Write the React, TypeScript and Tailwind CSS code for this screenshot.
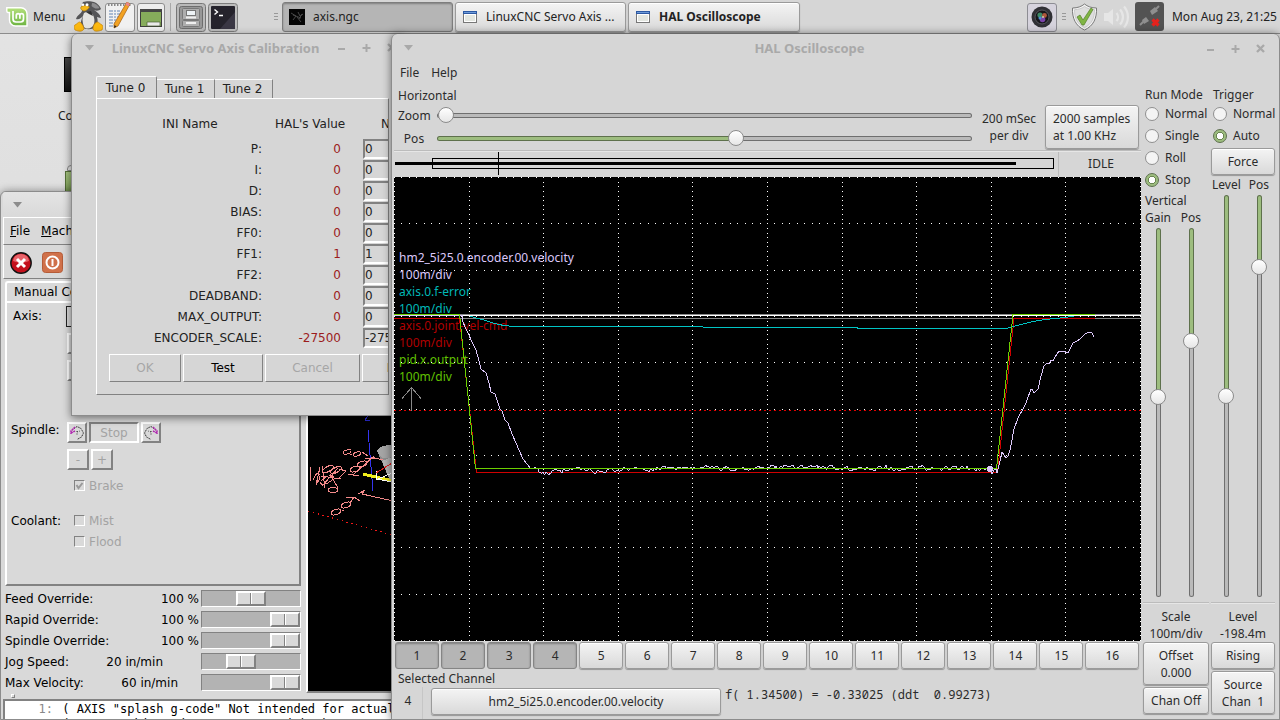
import React from "react";

type RangeStyle = React.CSSProperties & { "--fill"?: string };

/* ---------- shared widgets ---------- */

const gtkButton =
  "rounded-[3px] border border-[#9a9a9a] bg-linear-to-b from-[#f4f4f4] to-[#d9d9d9] shadow-[inset_0_1px_0_#ffffff,0_1px_1px_rgba(0,0,0,0.3)]";

function HSlider({ label, value }: { label: string; value: number }) {
  const style: RangeStyle = { "--fill": `${value}%` };
  return (
    <input
      type="range"
      aria-label={label}
      min={0}
      max={100}
      defaultValue={value}
      style={style}
      className="h-4 w-full min-w-0 appearance-none bg-transparent [&::-webkit-slider-runnable-track]:h-[5px] [&::-webkit-slider-runnable-track]:rounded-full [&::-webkit-slider-runnable-track]:border [&::-webkit-slider-runnable-track]:border-black/40 [&::-webkit-slider-runnable-track]:bg-[linear-gradient(to_right,#9dbd7f_var(--fill),#bababa_var(--fill))] [&::-webkit-slider-runnable-track]:bg-origin-border [&::-webkit-slider-thumb]:-mt-[7px] [&::-webkit-slider-thumb]:size-4 [&::-webkit-slider-thumb]:appearance-none [&::-webkit-slider-thumb]:rounded-full [&::-webkit-slider-thumb]:border [&::-webkit-slider-thumb]:border-[#8c8c8c] [&::-webkit-slider-thumb]:bg-linear-to-b [&::-webkit-slider-thumb]:from-white [&::-webkit-slider-thumb]:to-[#e6e6e6]"
    />
  );
}

function VSlider({ label, value }: { label: string; value: number }) {
  const style: RangeStyle = { "--fill": `${value}%` };
  return (
    <input
      type="range"
      aria-label={label}
      min={0}
      max={100}
      step="any"
      defaultValue={value}
      style={style}
      className="h-full w-4 appearance-none bg-transparent [writing-mode:vertical-lr] [&::-webkit-slider-runnable-track]:w-[5px] [&::-webkit-slider-runnable-track]:rounded-full [&::-webkit-slider-runnable-track]:border [&::-webkit-slider-runnable-track]:border-black/40 [&::-webkit-slider-runnable-track]:bg-[linear-gradient(to_bottom,#9dbd7f_var(--fill),#bababa_var(--fill))] [&::-webkit-slider-runnable-track]:bg-origin-border [&::-webkit-slider-thumb]:-ml-[7px] [&::-webkit-slider-thumb]:size-4 [&::-webkit-slider-thumb]:appearance-none [&::-webkit-slider-thumb]:rounded-full [&::-webkit-slider-thumb]:border [&::-webkit-slider-thumb]:border-[#8c8c8c] [&::-webkit-slider-thumb]:bg-linear-to-b [&::-webkit-slider-thumb]:from-white [&::-webkit-slider-thumb]:to-[#e6e6e6]"
    />
  );
}

function GtkRadio({ name, label, checked }: { name: string; label: string; checked?: boolean }) {
  return (
    <label className="flex h-[22px] items-center gap-[6px] whitespace-nowrap pl-[2px]">
      <input
        type="radio"
        name={name}
        defaultChecked={checked}
        className="size-[14px] shrink-0 appearance-none rounded-full border border-[#8f8f8f] bg-[#f4f4f4] checked:border-[#5c6e4c] checked:bg-[radial-gradient(circle,#ffffff_0_3px,#6b8552_3px_4px,#9dbd7f_4px)]"
      />
      {label}
    </label>
  );
}

function TitleBar({ title, className }: { title: string; className: string }) {
  return (
    <div className={className}>
      <svg width="9" height="6" viewBox="0 0 9 6" className="shrink-0">
        <path d="M0 0h9L4.500 5.500z" fill="#a9a9a9" />
      </svg>
      <div className="flex-1 truncate text-center font-['Noto_Sans',sans-serif] text-[13px] leading-4 font-bold text-[#a9a9a9]">
        {title}
      </div>
      <div className="flex shrink-0 gap-4">
        <button aria-label="Minimize" className="size-[9px]">
          <svg width="9" height="9" viewBox="0 0 9 9"><path d="M1 6h7" stroke="#a9a9a9" strokeWidth="2" /></svg>
        </button>
        <button aria-label="Maximize" className="size-[9px]">
          <svg width="9" height="9" viewBox="0 0 9 9"><path d="M.5 5h8M4.500 1v8" stroke="#a9a9a9" strokeWidth="2" /></svg>
        </button>
        <button aria-label="Close" className="size-[9px]">
          <svg width="9" height="9" viewBox="0 0 9 9"><path d="M1 1l7 7M8 1l-7 7" stroke="#a9a9a9" strokeWidth="2.400" /></svg>
        </button>
      </div>
    </div>
  );
}

/* ---------- top panel ---------- */

function MintLogo() {
  return (
    <svg width="22" height="20" viewBox="0 0 22 20">
      <defs>
        <linearGradient id="mint" x1="0" y1="0" x2="0" y2="1">
          <stop offset="0" stopColor="#b5e07c" />
          <stop offset="1" stopColor="#6db442" />
        </linearGradient>
      </defs>
      <path d="M.8.8h14.200a6 6 0 0 1 6 6v12.200h-11.500a6 6 0 0 1-6-6V5.500H2A1.500 1.500 0 0 1 .8 4z" fill="url(#mint)" stroke="#fff" strokeWidth="1.400" />
      <path d="M7 4v8a3 3 0 0 0 3 3h4.500a3 3 0 0 0 3-3V8.500a1.800 1.800 0 0 0-3.600 0v3.300M13.900 8.500a1.800 1.800 0 0 0-3.600 0v3.300" fill="none" stroke="#fff" strokeWidth="1.700" />
    </svg>
  );
}

function Penguin() {
  return (
    <svg width="29" height="31" viewBox="0 0 29 31">
      <path d="M9 1c3-1 8-1 11 0 3 1 6 4 7 7-2 2-5 2-7 1 3 2 6 4 7 8-2 0-3-1-4-1 1 3 1 7-1 10-4 3-11 3-14 0-2-3-1-7 1-11-2 2-4 4-7 3 1-4 5-5 6-8 0-2-1-6 1-9z" fill="#555557" />
      <path d="M18 2c3 0 6 2 7.500 5-3 1.500-6 0-8-2z" fill="#8d8d8f" />
      <path d="M10 12c3-2 7-1 9 2 2 4 2 9-1 12-3 2-6 2-8 0-2-5-2-10 0-14z" fill="#e4e3df" />
      <path d="M12 11l5-1 2 5-4-2z" fill="#333" />
      <path d="M7 6c2-2 6-2 8.500 0-1 2-3.500 4-5.500 4-2-.500-4-2-3-4z" fill="#f5b719" stroke="#a87609" strokeWidth=".6" />
      <circle cx="9" cy="3.800" r="1.300" fill="#fff" />
      <circle cx="13" cy="3.800" r="1.500" fill="#fff" />
      <path d="M.8 24c2-.500 3-3 5-3 2 1 4.200 5 4.200 7-2 3-5 2.500-9 1-1-2-1-3-.2-5zM28.200 24c-2-.500-3-3-5-3-3 1-4.200 4-4.200 7 1 3 5 2.500 9 1 1-2 1-3 .2-5z" fill="#fbb80f" stroke="#c88407" strokeWidth=".7" />
    </svg>
  );
}

function NotesIcon() {
  return (
    <svg width="30" height="30" viewBox="0 0 30 30">
      <rect x=".5" y="1.500" width="29" height="28" rx="2.500" fill="#f1f1f1" stroke="#8d8d8d" />
      <path d="M3 3h24" stroke="#888" strokeWidth="2" strokeDasharray="1.500 1.500" />
      <path d="M4 9h11M4 12h14M4 15h12M4 18h10M4 21h8M4 24h7" stroke="#93a9c7" strokeWidth="1.300" strokeDasharray="4 1 2 1" />
      <path d="M22 0l3 2-12 22-4 2 0-4z" fill="#f2a223" stroke="#a35e10" strokeWidth=".7" />
      <path d="M22 0l3 2-1.500 2.500-3-2z" fill="#e9838a" />
      <path d="M9.500 23l2 1.500-2.500 1.500z" fill="#222" />
    </svg>
  );
}

function ShowDesktopIcon() {
  return (
    <svg width="28" height="30" viewBox="0 0 28 30">
      <rect x=".5" y="1.500" width="27" height="28" rx="2.500" fill="#ededed" stroke="#8d8d8d" />
      <rect x="3.500" y="7.500" width="21" height="17" fill="#86ac5b" stroke="#3d3d3d" />
      <path d="M3 7h22v3H3z" fill="#454545" />
      <path d="M10 20h13v4H10z" fill="#e9e9e9" stroke="#4a5f32" strokeWidth=".7" />
    </svg>
  );
}

function CabinetIcon() {
  return (
    <svg width="30" height="30" viewBox="0 0 30 30">
      <rect x=".5" y="1.500" width="29" height="28" rx="3" fill="#b9b9b9" stroke="#777" />
      <rect x="3.500" y="4.500" width="23" height="22" rx="2" fill="#989898" stroke="#6d6d6d" />
      <rect x="6.500" y="6.500" width="17" height="11" rx="1" fill="#aeaeae" stroke="#787878" />
      <rect x="6.500" y="18.500" width="17" height="6" rx="1" fill="#aeaeae" stroke="#787878" />
      <rect x="10.500" y="8.500" width="9" height="5" fill="#edf2f5" stroke="#777" />
      <path d="M10 15.500h10M10 21h10" stroke="#efefef" strokeWidth="2" />
    </svg>
  );
}

function TerminalIcon() {
  return (
    <svg width="30" height="30" viewBox="0 0 30 30">
      <rect x=".5" y="1.500" width="29" height="28" rx="3" fill="#bdbdbd" stroke="#7d7d7d" />
      <rect x="3" y="4" width="24" height="23" rx="1" fill="#25232c" />
      <path d="M27 10v17H12z" fill="#3a3744" />
      <path d="M6.500 7.500l3 2.500-3 2.500M11 13.500h4" fill="none" stroke="#fff" strokeWidth="1.400" />
    </svg>
  );
}

function AxisIcon() {
  return (
    <svg width="16" height="16" viewBox="0 0 16 16">
      <rect width="16" height="16" fill="#050505" />
      <path d="M2 4l5 3-3 4M9 3l2 4 3-2M8 8l4 5M4 6l8 3M10 10l3-5" stroke="#484848" fill="none" />
    </svg>
  );
}

function WindowIcon() {
  return (
    <svg width="14" height="12" viewBox="0 0 14 12">
      <rect x=".5" y=".5" width="13" height="11" fill="#e3e6e0" stroke="#777" />
      <path d="M0 0h14v3H0z" fill="#2c59a3" />
      <path d="M1 1h12v1H1z" fill="#6d9ad8" />
      <path d="M1.500 3.500h11v7h-11z" fill="none" stroke="#fff" />
    </svg>
  );
}

function Grip() {
  return (
    <svg width="4" height="8" viewBox="0 0 4 8" className="shrink-0">
      <path d="M0 .5h4M0 3.500h4M0 6.500h4" stroke="#999" />
    </svg>
  );
}

function CameraIcon() {
  return (
    <svg width="30" height="30" viewBox="0 0 30 30">
      <rect x=".5" y="1.500" width="29" height="28" rx="2.500" fill="#d6d3dd" stroke="#8d8d93" />
      <circle cx="15" cy="15" r="10.500" fill="#303035" />
      <circle cx="15" cy="15" r="7" fill="#17171b" stroke="#56565e" />
      <circle cx="13" cy="13" r="2.600" fill="#3e8a66" />
      <circle cx="17.500" cy="13.500" r="2.400" fill="#b0583c" />
      <circle cx="15.500" cy="17.500" r="2.800" fill="#7a42a8" />
      <circle cx="13" cy="16" r="1.500" fill="#4a90d0" />
      <circle cx="16" cy="15" r=".9" fill="#d7e6a0" />
    </svg>
  );
}

function ShieldIcon() {
  return (
    <svg width="27" height="28" viewBox="0 0 27 28">
      <path d="M13.500 1c3 2.500 7 4 12 4 .5 10-3 18-12 22C4.500 23 1 15 1.500 5c5 0 9-1.500 12-4z" fill="#f4f4f4" stroke="#7a7a7a" />
      <path d="M13.500 3.500c3 2 6 3 10 3.200C23.500 15 21 21 13.500 24.700 6 21 3.500 15 3.500 6.700c4-.2 7-1.200 10-3.200z" fill="#dedede" stroke="#bdbdbd" strokeWidth=".7" />
      <path d="M6 14l3-2 3 5 8-12 2 1.500L13 22h-2z" fill="#80b544" stroke="#557f29" strokeWidth=".7" />
    </svg>
  );
}

function VolumeIcon() {
  return (
    <svg width="27" height="26" viewBox="0 0 27 26" fill="none" stroke="#e6e6e6" strokeWidth="2.200">
      <path d="M1 9h4l5-4v16l-5-4H1z" fill="#e6e6e6" stroke="none" />
      <path d="M13.500 9a6 6 0 0 1 0 8M17 5.500a11 11 0 0 1 0 15M21 2.500a16 16 0 0 1 0 21" />
    </svg>
  );
}

function NetworkIcon() {
  return (
    <svg width="29" height="29" viewBox="0 0 29 29">
      <rect width="29" height="29" rx="3" fill="#535353" />
      <path d="M5 23l4-4M20 8l4-4" stroke="#8f8f8f" strokeWidth="2" />
      <path d="M7 18l4-3 3 4-5 3zM15 9l5-4 3 4-6 4z" fill="#8f8f8f" />
      <path d="M17.500 17.500l6 6M23.500 17.500l-6 6" stroke="#e4221d" strokeWidth="3.200" />
    </svg>
  );
}

function TopPanel() {
  return (
    <header className="relative flex h-[34px] items-center border-b border-[#8c8c8c] bg-[#d6d6d6] font-['Noto_Sans',sans-serif] text-[12px] text-[#222]">
      <button className="flex w-[74px] shrink-0 items-center gap-[5px] pl-[6px]">
        <MintLogo />
        Menu
      </button>
      <div className="flex shrink-0 items-center gap-[2px]">
        <button aria-label="LinuxCNC"><Penguin /></button>
        <button aria-label="Notes"><NotesIcon /></button>
        <button aria-label="Show desktop"><ShowDesktopIcon /></button>
        <div className="mx-[3px] h-7 w-px bg-[#a8a8a8]" />
        <button aria-label="Files"><CabinetIcon /></button>
        <button aria-label="Terminal"><TerminalIcon /></button>
      </div>
      <div className="ml-[36px] flex min-w-0 flex-1 items-center gap-[2px]">
        <Grip />
        <button className="ml-[2px] flex h-[30px] w-[171px] shrink-0 items-center gap-2 rounded-[3px] border border-[#7d7d7d] bg-[#b5b5b5] px-[6px] shadow-[inset_0_1px_2px_rgba(0,0,0,0.3)]">
          <AxisIcon />
          axis.ngc
        </button>
        <button className={`${gtkButton} flex h-[30px] w-[171px] shrink-0 items-center gap-[9px] px-[7px]`}>
          <WindowIcon />
          LinuxCNC Servo Axis ...
        </button>
        <button className={`${gtkButton} flex h-[30px] w-[172px] shrink-0 items-center gap-[9px] px-[7px] font-bold`}>
          <WindowIcon />
          HAL Oscilloscope
        </button>
      </div>
      <div className="flex shrink-0 items-center gap-[5px] pr-[3px]">
        <CameraIcon />
        <Grip />
        <ShieldIcon />
        <VolumeIcon />
        <NetworkIcon />
        <time className="ml-[3px] whitespace-nowrap">Mon Aug 23, 21:25</time>
      </div>
    </header>
  );
}

/* ---------- AXIS main window ---------- */

const tkRaised = "border-t-2 border-l-2 border-r-2 border-b-2 border-t-white border-l-white border-r-[#828282] border-b-[#828282]";
const tkSunken = "border-2 border-t-[#828282] border-l-[#828282] border-r-white border-b-white";

function TkScale({ label, value }: { label: string; value: number }) {
  return (
    <input
      type="range"
      aria-label={label}
      defaultValue={value}
      className="h-[17px] w-[100px] appearance-none border border-t-[#828282] border-r-white border-b-white border-l-[#828282] bg-[#b3b3b3] [&::-webkit-slider-thumb]:h-[15px] [&::-webkit-slider-thumb]:w-[30px] [&::-webkit-slider-thumb]:appearance-none [&::-webkit-slider-thumb]:border-2 [&::-webkit-slider-thumb]:border-t-white [&::-webkit-slider-thumb]:border-r-[#828282] [&::-webkit-slider-thumb]:border-b-[#828282] [&::-webkit-slider-thumb]:border-l-white [&::-webkit-slider-thumb]:bg-[linear-gradient(to_right,#d9d9d9_12px,#828282_12px_13px,#ffffff_13px_14px,#d9d9d9_14px)]"
    />
  );
}

const overrides = [
  { label: "Feed Override:", text: "100 %", value: 50, box: "w-[199px]" },
  { label: "Rapid Override:", text: "100 %", value: 100, box: "w-[199px]" },
  { label: "Spindle Override:", text: "100 %", value: 100, box: "w-[199px]" },
  { label: "Jog Speed:", text: "20 in/min", value: 36, box: "w-[163px]" },
  { label: "Max Velocity:", text: "60 in/min", value: 100, box: "w-[178px]" },
];

function SpindleIcon({ flip }: { flip?: boolean }) {
  return (
    <svg width="16" height="16" viewBox="0 0 16 16" className={flip ? "-scale-x-100" : ""}>
      <path d="M3 5L8 1.500l4 2L14.500 8l-2 4L8 14.500" fill="none" stroke="#222" strokeDasharray="1.500 1" />
      <path d="M6 2L2 6v3M2 8l4-2" fill="none" stroke="#b028b0" strokeWidth="1.500" strokeDasharray="2 .5" />
      <path d="M8 6v5M8 7l3-1" stroke="#333" strokeDasharray="1 1.500" />
    </svg>
  );
}

function TkCheck({ label, checked }: { label: string; checked?: boolean }) {
  return (
    <label className="flex h-[21px] items-center gap-[4px] text-[#a3a3a3]">
      <span className="grid">
        <input type="checkbox" disabled defaultChecked={checked} className="col-start-1 row-start-1 size-[11px] appearance-none border border-t-[#828282] border-r-white border-b-white border-l-[#828282]" />
        {checked && (
          <svg width="11" height="11" viewBox="0 0 11 11" className="col-start-1 row-start-1">
            <path d="M2.500 5l2 3L8.500 3" fill="none" stroke="#999" strokeWidth="2" />
          </svg>
        )}
      </span>
      {label}
    </label>
  );
}

function Preview() {
  return (
    <svg className="h-full w-full bg-black" aria-label="Tool path preview" shapeRendering="crispEdges" fill="none">
      <g transform="translate(0,135)">
        <path d="M60 0l-3 4 5 1" stroke="#2a2ad0" />
        <path d="M60 14l5 61" stroke="#3535f0" />
        <path d="M69 35q2-6 15-6v40z" fill="#8f8f8f" />
        <path d="M74 45l10-4v28z" fill="#b6b6b6" />
        <path d="M69 35q2-6 15-6v12q-12 4-15-6z" fill="#a5a5a5" />
        <path d="M55 58l30 7" stroke="#f1ee1c" strokeWidth="3" />
        <path d="M68 55v8l17 3M70 63l14-6" stroke="#fff" />
        <path d="M68 57l16-10" stroke="#d22" />
        <g stroke="#f58b8b">
          <ellipse cx="39" cy="36" rx="4" ry="2" transform="rotate(-15 39 36)" />
          <ellipse cx="49" cy="38" rx="4" ry="2" transform="rotate(-20 49 38)" />
          <path d="M42 38h2M54 36l6 4M57 42l12 1M66 40L46 58M40 58l11 2M63 41l12 3" />
          <ellipse cx="47" cy="53" rx="5" ry="2.500" transform="rotate(-20 47 53)" />
          <ellipse cx="54" cy="48" rx="5" ry="2.500" transform="rotate(-20 54 48)" />
          <path d="M2 51v14M5 64q3-8 6-6t-2 9M12 51l-4 18" />
          <ellipse cx="20" cy="53" rx="6" ry="2.500" transform="rotate(-30 20 53)" />
          <ellipse cx="28" cy="54" rx="6" ry="2.500" transform="rotate(-30 28 54)" />
          <path d="M14 50l3 22M13 60l20 3M14 70l16-18M31 53l7 2-8 8M22 58l8 14" />
          <ellipse cx="19" cy="64" rx="7" ry="3" transform="rotate(-30 19 64)" />
          <ellipse cx="25" cy="74" rx="5" ry="2.500" />
          <ellipse cx="28" cy="96" rx="5" ry="2.500" transform="rotate(-20 28 96)" />
          <ellipse cx="38" cy="89" rx="5" ry="2.500" transform="rotate(-20 38 89)" />
          <path d="M34 94h2M38 82l8-1 6 4M46 81l-4 6M50 78l7-4-3 4 31 7" />
        </g>
        <path d="M0 95L84 119" stroke="#f01818" strokeDasharray="1.500 3.500" />
      </g>
    </svg>
  );
}

function AxisWindow() {
  return (
    <section className="absolute top-[191px] bottom-0 left-0 flex w-[640px] flex-col overflow-hidden rounded-t-md border border-[#8c8c8c] bg-[#d9d9d9] pl-[2px] font-['DejaVu_Sans',sans-serif] text-[12px] leading-4 text-black shadow-[0_0_8px_rgba(0,0,0,0.4)]">
      <div className="flex h-[25px] shrink-0 items-center bg-linear-to-b from-[#e4e4e4] to-[#d9d9d9] pl-[10px]">
        <svg width="9" height="6" viewBox="0 0 9 6"><path d="M0 0h9L4.500 5.500z" fill="#8c8c8c" /></svg>
      </div>
      <nav className="flex h-[28px] shrink-0 items-center gap-[11px] border-t border-b border-l border-t-white border-b-[#828282] border-l-white pl-[6px]">
        <button><u>F</u>ile</button>
        <button><u>M</u>achine</button>
        <button><u>V</u>iew</button>
      </nav>
      <div className="flex h-[34px] shrink-0 items-center gap-[10px] border-b border-l border-b-[#828282] border-l-white pt-[2px] pl-[6px]">
        <button aria-label="Emergency stop">
          <svg width="22" height="22" viewBox="0 0 22 22">
            <circle cx="11" cy="11" r="10.200" fill="#c4101c" stroke="#111" strokeWidth="1.400" />
            <path d="M3 9a8 7 0 0 1 16 0q-8 3-16 0z" fill="#e8636a" />
            <path d="M7 7l8 8M15 7l-8 8" stroke="#fff" strokeWidth="3" />
          </svg>
        </button>
        <button aria-label="Machine power">
          <svg width="21" height="21" viewBox="0 0 21 21">
            <rect x=".5" y=".5" width="20" height="20" rx="3" fill="#d0714a" stroke="#b55c38" />
            <circle cx="10.500" cy="10.500" r="6" fill="none" stroke="#fff" strokeWidth="2" />
            <path d="M10.500 7v7" stroke="#fff" strokeWidth="2" />
          </svg>
        </button>
        <div className="h-6 w-[2px] bg-[#828282]" />
      </div>
      <div className="flex min-h-0 flex-1">
        <div className="flex w-[298px] shrink-0 flex-col pt-[2px]">
          <div className="flex pl-[2px]">
            <button className="h-5 rounded-t-[3px] border-t-2 border-l-2 border-white px-[7px]">Manual Control [F3]</button>
          </div>
          <div className="ml-[2px] flex flex-1 flex-col border-2 border-t-white border-r-[#828282] border-b-[#828282] border-l-white pl-[4px]">
            <div className="flex pt-[3px]">
              <span className="w-[55px] pl-[2px] pt-[2px]">Axis:</span>
              <div className="flex flex-col gap-[6px]">
                <div className="h-[21px] w-[180px] border border-[#222]" />
                <div className={`${tkRaised} ml-px h-[21px] w-[90px]`} />
                <div className={`${tkRaised} ml-px h-[21px] w-[90px]`} />
              </div>
            </div>
            <div className="mt-[41px] flex h-[21px] gap-[2px]">
              <span className="w-[54px]">Spindle:</span>
              <button aria-label="Spindle counterclockwise" className={`${tkRaised} w-[20px]`}><SpindleIcon /></button>
              <button disabled className={`${tkSunken} w-[50px] text-[#a3a3a3]`}>Stop</button>
              <button aria-label="Spindle clockwise" className={`${tkRaised} w-[20px]`}><SpindleIcon flip /></button>
            </div>
            <div className="mt-[6px] flex h-[21px] gap-[2px] pl-[56px] leading-3 text-[#a3a3a3]">
              <button disabled className={`${tkRaised} w-[22px]`}>-</button>
              <button disabled className={`${tkRaised} w-[22px]`}>+</button>
            </div>
            <div className="mt-[5px] pl-[63px]"><TkCheck label="Brake" checked /></div>
            <div className="mt-[14px] flex">
              <span className="w-[63px] pt-[3px]">Coolant:</span>
              <div>
                <TkCheck label="Mist" />
                <TkCheck label="Flood" />
              </div>
            </div>
          </div>
          <div className="shrink-0 pt-[2px] pl-[2px]">
            {overrides.map((o) => (
              <div key={o.label} className="flex h-[21px] items-center justify-between">
                <div className={`${o.box} -ml-[5px] flex shrink-0 justify-between whitespace-nowrap pl-[5px]`}>
                  <span>{o.label}</span>
                  <span>{o.text}</span>
                </div>
                <TkScale label={o.label} value={o.value} />
              </div>
            ))}
          </div>
        </div>
        <div className="ml-[5px] min-w-0 flex-1 border-2 border-t-[#828282] border-r-white border-b-[#828282] border-l-white">
          <Preview />
        </div>
      </div>
      <div className="flex h-[6px] shrink-0 items-center pl-[8px]"><div className="size-1 border border-white border-r-[#828282] border-b-[#828282]" /></div>
      <div className="h-[20px] shrink-0 overflow-hidden border-t-2 border-l-2 border-[#828282] bg-white pt-px font-['DejaVu_Sans_Mono',monospace] leading-[15px] whitespace-pre">
        <div><span className="inline-block w-[50px] pr-[2px] text-right text-[#888]">1:</span>{' ( AXIS "splash g-code" Not intended for actual milling )'}</div>
        <div><span className="inline-block w-[50px] pr-[2px] text-right text-[#888]">2:</span>{" ( To run this code anyway you might have to"}</div>
      </div>
    </section>
  );
}

/* ---------- calibration window ---------- */

const params = [
  ["P:", "0"],
  ["I:", "0"],
  ["D:", "0"],
  ["BIAS:", "0"],
  ["FF0:", "0"],
  ["FF1:", "1"],
  ["FF2:", "0"],
  ["DEADBAND:", "0"],
  ["MAX_OUTPUT:", "0"],
  ["ENCODER_SCALE:", "-27500"],
];

const tk1 = "border border-t-white border-l-white border-r-[#828282] border-b-[#828282]";

function CalibrationWindow() {
  return (
    <section className="absolute top-[34px] left-[71px] flex w-[332px] flex-col rounded-t-md border border-t-0 border-[#8c8c8c] bg-[#d6d6d6] pb-[20px] font-['DejaVu_Sans',sans-serif] text-[12px] leading-4 text-[#222] shadow-[0_2px_8px_rgba(0,0,0,0.5)]">
      <TitleBar title="LinuxCNC Servo Axis Calibration" className="flex h-[27px] items-center pr-[6px] pl-[13px]" />
      <div className="mt-[15px] ml-[24px] flex w-[293px] items-end">
        <button className="h-[22px] w-[61px] rounded-t-[2px] border-t border-r border-l border-t-white border-r-[#828282] border-l-white pr-[2px]">Tune 0</button>
        <button className="h-[19px] w-[58px] border-t border-r border-t-white border-r-[#828282] pr-[2px]">Tune 1</button>
        <button className="h-[19px] w-[58px] border-t border-r border-t-white border-r-[#828282] pr-[2px]">Tune 2</button>
      </div>
      <div className={`${tk1} ml-[24px] w-[293px] overflow-hidden pt-[17px] pb-[12px]`}>
        <table className="w-[440px] table-fixed border-collapse">
          <thead>
            <tr className="h-[22px] align-top">
              <th className="w-[178px] pl-[8px] font-normal">INI Name</th>
              <th className="w-[88px] text-left font-normal whitespace-nowrap">HAL's Value</th>
              <th className="pl-[18px] text-left font-normal">New</th>
            </tr>
          </thead>
          <tbody>
            {params.map(([name, value]) => (
              <tr key={name} className="h-[21px]">
                <td className="pr-[13px] text-right">{name}</td>
                <td className="pr-[22px] text-right text-[#9c1c1c]">{value}</td>
                <td>
                  <input
                    aria-label={`${name} new value`}
                    defaultValue={value}
                    className="block h-[20px] w-[140px] border-2 border-t-[#828282] border-r-white border-b-white border-l-[#828282] bg-[#d6d6d6]"
                  />
                </td>
              </tr>
            ))}
          </tbody>
        </table>
        <div className="mt-[6px] ml-[12px] flex w-[440px] gap-[2px]">
          <button disabled className={`${tk1} h-[28px] w-[72px] text-[#a6a6a6]`}>OK</button>
          <button className={`${tk1} h-[28px] w-[80px] text-black`}>Test</button>
          <button disabled className={`${tk1} h-[28px] w-[95px] text-[#a6a6a6]`}>Cancel</button>
          <button className={`${tk1} h-[28px] w-[95px]`}>Refresh</button>
        </div>
      </div>
    </section>
  );
}

/* ---------- oscilloscope ---------- */

const W = 747;
const H = 464;

function gridPath() {
  let d = "";
  for (let i = 0; i <= 10; i++) {
    const x = Math.round((i * (W - 1)) / 10);
    const y = Math.round((i * (H - 1)) / 10);
    for (let k = 0; k <= 100; k++) {
      d += `M${x} ${Math.round((k * (H - 1)) / 100)}h1v1h-1z`;
      d += `M${Math.round((k * (W - 1)) / 100)} ${y}h1v1h-1z`;
    }
  }
  return d;
}

const fall = [
  [68, 138], [69, 145], [71, 150], [74, 156], [79, 167], [82, 173], [85, 184], [87, 192], [92, 196], [95, 206], [97, 215],
  [101, 217], [104, 226], [106, 232], [108, 234], [111, 243], [114, 246], [118, 257], [122, 266], [125, 273], [129, 282],
  [133, 287], [137, 292],
];

const rise = [
  [596, 292], [598, 297], [600, 293], [602, 292], [603, 296], [606, 284], [608, 275], [610, 278], [612, 281], [614, 279],
  [616, 273], [618, 263], [620, 252], [624, 241], [629, 232], [632, 226], [637, 212], [638, 212], [640, 216], [644, 212],
  [647, 199], [650, 189], [653, 186], [655, 187], [657, 183], [659, 184], [661, 180], [665, 174], [669, 174], [674, 176],
  [676, 172], [679, 166], [683, 164], [686, 162], [691, 157], [695, 155], [698, 156], [700, 160],
];

function velocityPoints() {
  const mid: number[][] = [];
  let seed = 17;
  let drift = 0;
  const random = () => {
    seed = (seed * 48271) % 2147483647;
    return seed / 2147483647 - 0.5;
  };
  for (let x = 138; x < 596; x += 1) {
    drift = drift * 0.7 + random() * 3.6;
    const base = x < 145 ? 293 : x < 165 ? 295 : x < 215 ? 293 : x < 260 ? 292 : 291;
    mid.push([x, Math.round(base + drift)]);
  }
  return [[0, 138], ...fall, ...mid, ...rise].map((p) => p.join(",")).join(" ");
}

const traces = [
  ["hm2_5i25.0.encoder.00.velocity", "text-[#dcc8fa]"],
  ["axis.0.f-error", "text-[#00b8b8]"],
  ["axis.0.joint-vel-cmd", "text-[#b00000]"],
  ["pid.x.output", "text-[#60c000]"],
];

function Scope() {
  return (
    <div className="relative min-h-0 flex-1 bg-black">
      <div className="absolute top-[72px] left-[5px] text-[12px] leading-[17px]">
        {traces.map(([name, color]) => (
          <div key={name} className={color}>
            {name}
            <br />
            100m/div
          </div>
        ))}
      </div>
      <svg className="absolute inset-0 h-full w-full" viewBox={`0 0 ${W} ${H}`} preserveAspectRatio="none" shapeRendering="crispEdges" fill="none">
        <path d={gridPath()} fill="#fff" />
        <path d={`M0 137.500H${W}M0 141.500H${W}`} stroke="#888" />
        <path d="M17.500 234v-23M8 221.500l9.500-11 9.500 11" stroke="#888" />
        <path d={`M0 233.500H${W}`} stroke="#e00000" strokeDasharray="2 3" />
        <path d="M0 141.500H65.500L82.500 295.500H603.500L620 141.500H701" stroke="#d00000" />
        <path d="M70 138.500h4l10 3 8 2 8 3 10 2 10 1H308l2 1H463l1 1H612l7-2 8-2 12-3 12-2 20-2 12-2h18" stroke="#00c4c4" />
        <path d={`M0 138.500H${W}`} stroke="#fff" />
        <polyline points={velocityPoints()} stroke="#dcc8fa" />
        <path d="M0 137.500H65.500L81.500 291.500H602.500L619 137.500H701" stroke="#6cd000" />
        <circle cx="596" cy="292" r="3.200" fill="#dcc8fa" />
      </svg>
    </div>
  );
}

function Separator() {
  return <div className="h-[2px] shrink-0 border-t border-[#bcbcbc] bg-[#e6e6e6]" />;
}

function HalWindow() {
  return (
    <section className="absolute top-[34px] right-0 bottom-0 left-[391px] flex flex-col rounded-t-md border border-t-0 border-[#8c8c8c] bg-[#d6d6d6] px-[2px] font-['Noto_Sans',sans-serif] text-[12px] leading-4 text-[#2b2b2b] shadow-[0_0_8px_rgba(0,0,0,0.5)]">
      <TitleBar title="HAL Oscilloscope" className="flex h-[28px] shrink-0 items-center pr-[12px] pl-[10px]" />
      <nav className="flex h-[21px] shrink-0 items-center gap-[12px] pl-[6px]">
        <button>File</button>
        <button>Help</button>
      </nav>
      <div className="flex min-h-0 flex-1 gap-[2px]">
        <main className="flex min-w-0 flex-1 flex-col">
          <div className="grid h-[67px] shrink-0 grid-cols-[1fr_66px_100px]">
            <div className="flex min-w-0 flex-col pt-[5px] pr-[3px] pl-[4px]">
              <span>Horizontal</span>
              <div className="grid flex-1 grid-cols-[32px_1fr] grid-rows-[23px_23px] items-center gap-x-[7px] text-center">
                <span>Zoom</span>
                <HSlider label="Zoom" value={0} />
                <span>Pos</span>
                <HSlider label="Horizontal position" value={56} />
              </div>
            </div>
            <div className="pt-[27px] pl-[2px] text-center leading-[17px] whitespace-nowrap">
              200 mSec
              <br />
              per div
            </div>
            <div className="pt-[22px] pl-[4px]">
              <button className={`${gtkButton} h-[44px] w-[94px] pl-[7px] text-left leading-[17px]`}>
                2000 samples
                <br />
                at 1.00 KHz
              </button>
            </div>
          </div>
          <Separator />
          <div className="flex h-[25px] shrink-0">
            <svg className="h-full min-w-0 flex-1" viewBox="0 0 664 25" preserveAspectRatio="none" shapeRendering="crispEdges" fill="none" stroke="#000">
              <path d="M1 11.500h621" strokeWidth="3" />
              <path d="M38.500 6.500h621v10h-621zM104.500 0v23" />
            </svg>
            <div className="w-px bg-[#bcbcbc]" />
            <div className="w-[82px] pt-[4px] pl-[2px] text-center">IDLE</div>
          </div>
          <Scope />
          <div className="flex shrink-0 gap-[2px] pt-px pr-[2px] pl-px">
            {Array.from({ length: 16 }, (_, i) => i + 1).map((n) => (
              <button
                key={n}
                className={
                  (n <= 4
                    ? "rounded-[3px] border border-[#858585] bg-[#b5b5b5] shadow-[inset_0_1px_2px_rgba(0,0,0,0.3)] "
                    : gtkButton + " ") + (n === 16 ? "h-[27px] flex-[54]" : "h-[27px] flex-[44]")
                }
              >
                {n}
              </button>
            ))}
          </div>
          <div className="h-[18px] shrink-0 pt-[2px] pl-[4px]">Selected Channel</div>
          <div className="flex h-[32px] shrink-0">
            <span className="w-[28px] pt-[6px] text-center">4</span>
            <div className="mr-[8px] h-full w-px bg-[#c6c6c6]" />
            <button className={`${gtkButton} mt-px h-[27px] w-[290px]`}>hm2_5i25.0.encoder.00.velocity</button>
            <pre className="ml-[4px] font-['Noto_Sans_Mono','DejaVu_Sans_Mono',monospace] leading-4">f( 1.34500) = -0.33025 (ddt  0.99273)</pre>
          </div>
        </main>
        <aside className="grid w-[134px] shrink-0 grid-cols-[66px_64px] gap-x-[2px]">
          <div className="flex min-h-0 flex-col">
            <span className="pt-[4px] pl-[2px]">Run Mode</span>
            <GtkRadio name="run" label="Normal" />
            <GtkRadio name="run" label="Single" />
            <GtkRadio name="run" label="Roll" />
            <GtkRadio name="run" label="Stop" checked />
            <span className="pt-[2px] pl-[2px]">Vertical</span>
            <div className="flex justify-between pt-[1px] pr-[8px] pl-[2px]">
              <span>Gain</span>
              <span>Pos</span>
            </div>
            <div className="mt-[2px] flex min-h-0 flex-1 gap-[17px] pl-[7px]">
              <VSlider label="Vertical gain" value={45.5} />
              <VSlider label="Vertical position" value={29.7} />
            </div>
            <div className="h-[5px] shrink-0" />
            <Separator />
            <div className="shrink-0 pt-[4px] text-center leading-[17px]">
              Scale
              <br />
              100m/div
            </div>
            <button className={`${gtkButton} h-[43px] shrink-0 leading-[17px]`}>
              Offset
              <br />
              0.000
            </button>
            <button className={`${gtkButton} mt-[2px] mb-[5px] h-[27px] shrink-0 whitespace-nowrap`}>Chan Off</button>
          </div>
          <div className="flex min-h-0 flex-col">
            <span className="pt-[4px] pl-[2px]">Trigger</span>
            <GtkRadio name="trigger" label="Normal" />
            <GtkRadio name="trigger" label="Auto" checked />
            <button className={`${gtkButton} mt-px h-[27px] shrink-0`}>Force</button>
            <div className="flex justify-between pt-[2px] pr-[6px] pl-[1px]">
              <span>Level</span>
              <span>Pos</span>
            </div>
            <div className="mt-[2px] flex min-h-0 flex-1 gap-[17px] pl-[7px]">
              <VSlider label="Trigger level" value={49.9} />
              <VSlider label="Trigger position" value={16.5} />
            </div>
            <div className="h-[5px] shrink-0" />
            <Separator />
            <div className="shrink-0 pt-[4px] text-center leading-[17px]">
              Level
              <br />
              -198.4m
            </div>
            <button className={`${gtkButton} h-[27px] shrink-0`}>Rising</button>
            <button className={`${gtkButton} mt-[2px] mb-[5px] h-[43px] shrink-0 leading-[17px]`}>
              Source
              <br />
              Chan&nbsp; 1
            </button>
          </div>
        </aside>
      </div>
    </section>
  );
}

/* ---------- desktop ---------- */

function DesktopIcons() {
  return (
    <div className="absolute top-[57px] left-[58px] flex flex-col items-start font-['Noto_Sans',sans-serif] text-[12px] leading-4 text-[#222]">
      <div className="ml-[6px] h-[35px] w-[48px] border border-black bg-linear-to-b from-[#444] to-[#111]" />
      <span className="mt-[16px]">Computer</span>
      <div className="mt-[41px] ml-[9px] h-[6px] w-[20px] rounded-t-sm border border-[#888] bg-[#e5e5e5]" />
      <div className="ml-[7px] h-[30px] w-[48px] border border-[#557038] bg-linear-to-b from-[#a3c17e] to-[#6e9245]" />
    </div>
  );
}

export default function App() {
  return (
    <div className="relative h-screen w-full overflow-hidden bg-linear-to-b from-[#e4e4e4] to-[#d4d4d4]">
      <TopPanel />
      <DesktopIcons />
      <AxisWindow />
      <CalibrationWindow />
      <HalWindow />
    </div>
  );
}
